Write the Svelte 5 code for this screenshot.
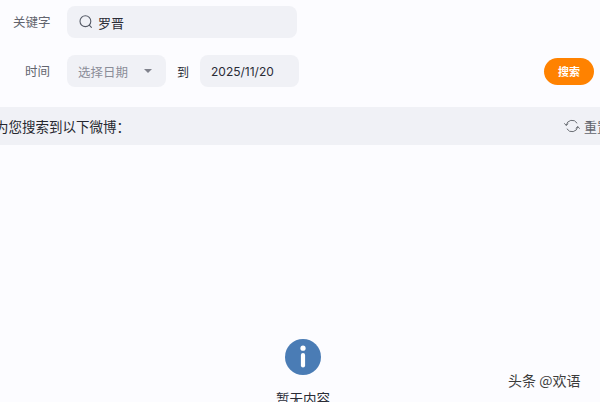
<script>
  let keyword = $state('罗晋');
  let endDate = $state('2025/11/20');
</script>

<div class="page">
  <div class="form">
    <div class="row first">
      <span class="label kw">关键字</span>
      <div class="field search-field">
        <svg width="16" height="16" viewBox="0 0 16 16" fill="none" stroke="#555a66" stroke-width="1.1">
          <circle cx="7.4" cy="7.2" r="5.4" />
          <path d="M11.3 11.2 L13.4 13.4" stroke-linecap="round" />
        </svg>
        <span class="value">{keyword}</span>
      </div>
    </div>
    <div class="row second">
      <span class="label time">时间</span>
      <div class="field select">
        <span class="placeholder">选择日期</span>
        <span class="caret"></span>
      </div>
      <span class="to">到</span>
      <div class="field date">
        <span class="num">{endDate}</span>
      </div>
      <button class="search-btn">搜索</button>
    </div>
  </div>

  <div class="band">
    <span class="result">为您搜索到以下微博：</span>
    <div class="reset">
      <svg width="16" height="16" viewBox="0 0 16 16" fill="none" stroke="#6a6e74" stroke-width="1" stroke-linecap="round" stroke-linejoin="round">
        <path d="M2.2 7.2 A5.9 5.9 0 0 1 13 5" />
        <path d="M13.8 8.8 A5.9 5.9 0 0 1 3 11" />
        <path d="M0.6 5.6 L2.2 7.4 L4 5.8" />
        <path d="M15.4 10.4 L13.8 8.6 L12 10.2" />
      </svg>
      <span>重置</span>
    </div>
  </div>

  <div class="empty">
    <svg width="36" height="36" viewBox="0 0 36 36">
      <circle cx="18" cy="18" r="18" fill="#4a7cb5" />
      <circle cx="18" cy="9.2" r="2.6" fill="#fff" />
      <rect x="15.9" y="14" width="4.2" height="14.5" rx="2.1" fill="#fff" />
    </svg>
    <span class="empty-text">暂无内容</span>
  </div>

  <div class="mark">头条 @欢语</div>
</div>

<style>
  :global(body) {
    margin: 0;
    background: #fcfcff;
  }

  .page {
    position: relative;
    width: 600px;
    height: 402px;
    overflow: hidden;
    background: #fcfcff;
    font-family: "Noto Sans CJK SC", "Noto Sans", sans-serif;
    font-weight: 400;
    color: #2a2c36;
  }

  .form {
    padding-top: 6px;
  }

  .row {
    display: flex;
    align-items: center;
    height: 32px;
  }

  .second {
    margin-top: 17px;
  }

  .label {
    font-size: 12.5px;
    line-height: 17px;
    margin-top: -2px;
    color: #62646e;
  }

  .kw {
    margin-left: 13px;
    width: 54px;
  }

  .time {
    margin-left: 25px;
    width: 42px;
  }

  .field {
    display: flex;
    align-items: center;
    height: 32px;
    box-sizing: border-box;
    background: #f0f1f6;
    border-radius: 8px;
    font-size: 12.5px;
  }

  .search-field {
    width: 230px;
    padding-left: 11px;
    gap: 4px;
  }

  .value {
    font-size: 13px;
  }

  .select {
    width: 99px;
    padding-left: 11px;
    justify-content: space-between;
    padding-right: 14px;
  }

  .placeholder {
    color: #8b8d98;
  }

  .caret {
    width: 0;
    height: 0;
    border-left: 4px solid transparent;
    border-right: 4px solid transparent;
    border-top: 4px solid #80828c;
  }

  .to {
    margin-left: 11px;
    width: 23px;
    font-size: 12px;
  }

  .date {
    width: 99px;
    padding-left: 11px;
  }

  .num {
    font-family: "Inter", "Noto Sans", sans-serif;
    font-size: 12px;
  }

  .search-btn {
    margin-left: auto;
    margin-right: 6px;
    width: 50px;
    height: 27px;
    border: none;
    border-radius: 14px;
    background: #ff8200;
    color: #fff;
    font-family: inherit;
    font-size: 11px;
    font-weight: 700;
    padding: 0;
  }

  .band {
    display: flex;
    align-items: center;
    justify-content: space-between;
    height: 38px;
    margin-top: 20px;
    background: #f0f1f6;
  }

  .result {
    margin-left: -5px;
    font-size: 13.5px;
    color: #26282f;
  }

  .reset {
    display: flex;
    align-items: center;
    gap: 4px;
    margin-right: -10px;
    font-size: 13px;
    color: #62646c;
  }

  .empty {
    display: flex;
    flex-direction: column;
    align-items: center;
    gap: 15px;
    margin-top: 194px;
    margin-left: 6px;
  }

  .empty-text {
    font-size: 13.5px;
    line-height: 17px;
    color: #2a2c36;
  }

  .mark {
    position: absolute;
    left: 508px;
    top: 370px;
    font-size: 14px;
    color: #3c3c3c;
  }
</style>
